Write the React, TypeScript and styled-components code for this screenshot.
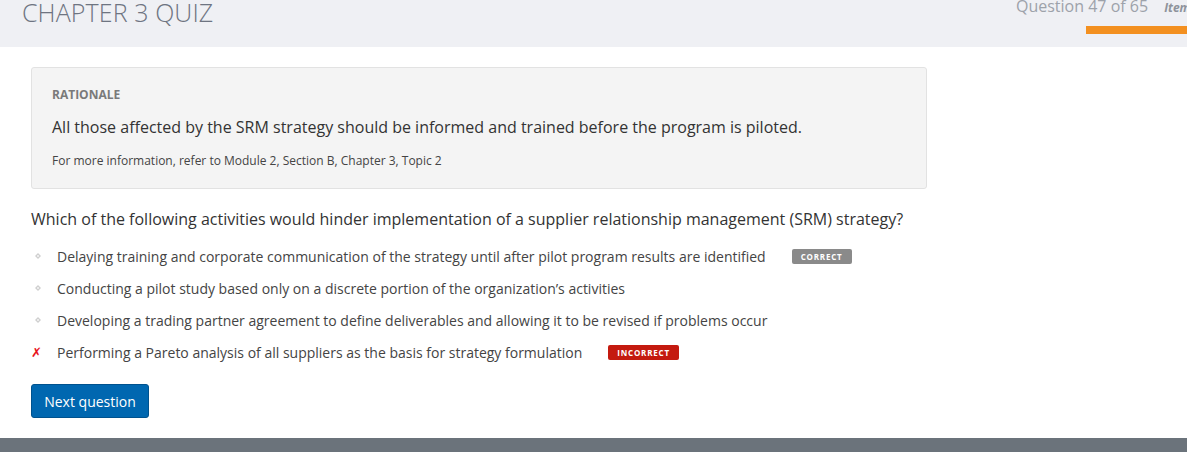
import React from "react";
import styled, { createGlobalStyle } from "styled-components";

const GlobalStyle = createGlobalStyle`
  html, body {
    margin: 0;
    padding: 0;
    background: #ffffff;
    font-family: "Open Sans", "Liberation Sans", sans-serif;
  }
`;

const Page = styled.div`
  width: 1187px;
  height: 452px;
  overflow: hidden;
  display: flex;
  flex-direction: column;
`;

const Header = styled.header`
  height: 47px;
  flex: none;
  background: #eff0f4;
  display: flex;
  justify-content: space-between;
  align-items: flex-start;
  overflow: hidden;
  white-space: nowrap;
`;

const Title = styled.h1`
  margin: 0 0 0 22px;
  font-size: 25px;
  line-height: 1;
  font-weight: 300;
  color: #6e7481;
  letter-spacing: 0.1px;
`;

const Progress = styled.div`
  display: flex;
  flex-direction: column;
  align-items: flex-start;
  width: 171px;
  flex: none;
`;

const ProgressRow = styled.div`
  display: flex;
  align-items: baseline;
  gap: 16px;
  margin-top: -2px;
`;

const Counter = styled.span`
  font-size: 16px;
  line-height: 1;
  font-weight: 400;
  color: #9da2aa;
`;

const ItemLabel = styled.span`
  font-size: 12px;
  font-style: italic;
  font-weight: 700;
  color: #8e939b;
`;

const Bar = styled.div`
  margin-top: 10px;
  margin-left: 70px;
  width: 120px;
  height: 8px;
  background: #f39020;
`;

const Main = styled.main`
  flex: 1;
  padding: 20px 31px 0;
`;

const Rationale = styled.section`
  box-sizing: border-box;
  width: 896px;
  height: 122px;
  padding: 19px 20px 0;
  background: #f4f4f4;
  border: 1px solid #e2e2e2;
  border-radius: 3px;
`;

const RationaleLabel = styled.div`
  font-size: 12px;
  line-height: 16px;
  font-weight: 700;
  color: #7a7a7a;
`;

const RationaleText = styled.p`
  margin: 12px 0 0;
  font-size: 16px;
  line-height: 24px;
  color: #333333;
`;

const RationaleRef = styled.p`
  margin: 14px 0 0;
  font-size: 12px;
  line-height: 16px;
  color: #444444;
`;

const Question = styled.p`
  margin: 18px 0 0;
  font-size: 16px;
  line-height: 24px;
  color: #333333;
`;

const Options = styled.ul`
  list-style: none;
  margin: 9px 0 0;
  padding: 0;
`;

const Option = styled.li`
  height: 32px;
  display: flex;
  align-items: center;
  font-size: 14px;
  color: #444444;
`;

const Marker = styled.span`
  width: 26px;
  flex: none;
  display: flex;
  align-items: center;
`;

const Cross = styled.span`
  font-family: "DejaVu Sans", sans-serif;
  font-size: 13px;
  font-weight: 700;
  color: #e8141c;
  line-height: 1;
`;

const Badge = styled.span<{ $tone: "correct" | "incorrect" }>`
  margin-left: 26px;
  display: inline-flex;
  align-items: center;
  justify-content: center;
  height: 15px;
  padding: 0 9px;
  border-radius: 2px;
  background: ${(p) => (p.$tone === "correct" ? "#8a8a8a" : "#c41a0f")};
  color: #ffffff;
  font-size: 8px;
  font-weight: 700;
  letter-spacing: 0.8px;
`;

const NextButton = styled.button`
  margin-top: 16px;
  box-sizing: border-box;
  width: 118px;
  height: 34px;
  background: #0067b0;
  border: 1px solid #00528e;
  border-radius: 3px;
  color: #ffffff;
  font-family: inherit;
  font-size: 14px;
  cursor: pointer;
`;

const Footer = styled.footer`
  margin-top: 20px;
  height: 15px;
  flex: none;
  background: #6b737b;
`;

const Diamond = () => (
  <svg width="8" height="8" viewBox="0 0 8 8" style={{ marginLeft: 3 }}>
    <path d="M4 1 L7 4 L4 7 L1 4 Z" fill="#cfcfcf" />
    <rect x="3" y="3" width="2" height="2" fill="#ececec" />
  </svg>
);

type Answer = { text: string; badge?: "correct" | "incorrect"; wrong?: boolean };

const answers: Answer[] = [
  {
    text: "Delaying training and corporate communication of the strategy until after pilot program results are identified",
    badge: "correct",
  },
  { text: "Conducting a pilot study based only on a discrete portion of the organization\u2019s activities" },
  {
    text: "Developing a trading partner agreement to define deliverables and allowing it to be revised if problems occur",
  },
  {
    text: "Performing a Pareto analysis of all suppliers as the basis for strategy formulation",
    badge: "incorrect",
    wrong: true,
  },
];

const App: React.FC = () => {
  return (
    <Page>
      <GlobalStyle />
      <Header>
        <Title>CHAPTER 3 QUIZ</Title>
        <Progress>
          <ProgressRow>
            <Counter>Question 47 of 65</Counter>
            <ItemLabel>Item</ItemLabel>
          </ProgressRow>
          <Bar />
        </Progress>
      </Header>
      <Main>
        <Rationale>
          <RationaleLabel>RATIONALE</RationaleLabel>
          <RationaleText>
            All those affected by the SRM strategy should be informed and trained before the program is piloted.
          </RationaleText>
          <RationaleRef>For more information, refer to Module 2, Section B, Chapter 3, Topic 2</RationaleRef>
        </Rationale>
        <Question>
          Which of the following activities would hinder implementation of a supplier relationship management (SRM)
          strategy?
        </Question>
        <Options>
          {answers.map((a) => (
            <Option key={a.text}>
              <Marker>{a.wrong ? <Cross>✗</Cross> : <Diamond />}</Marker>
              {a.text}
              {a.badge && <Badge $tone={a.badge}>{a.badge === "correct" ? "CORRECT" : "INCORRECT"}</Badge>}
            </Option>
          ))}
        </Options>
        <NextButton>Next question</NextButton>
      </Main>
      <Footer />
    </Page>
  );
};

export default App;
